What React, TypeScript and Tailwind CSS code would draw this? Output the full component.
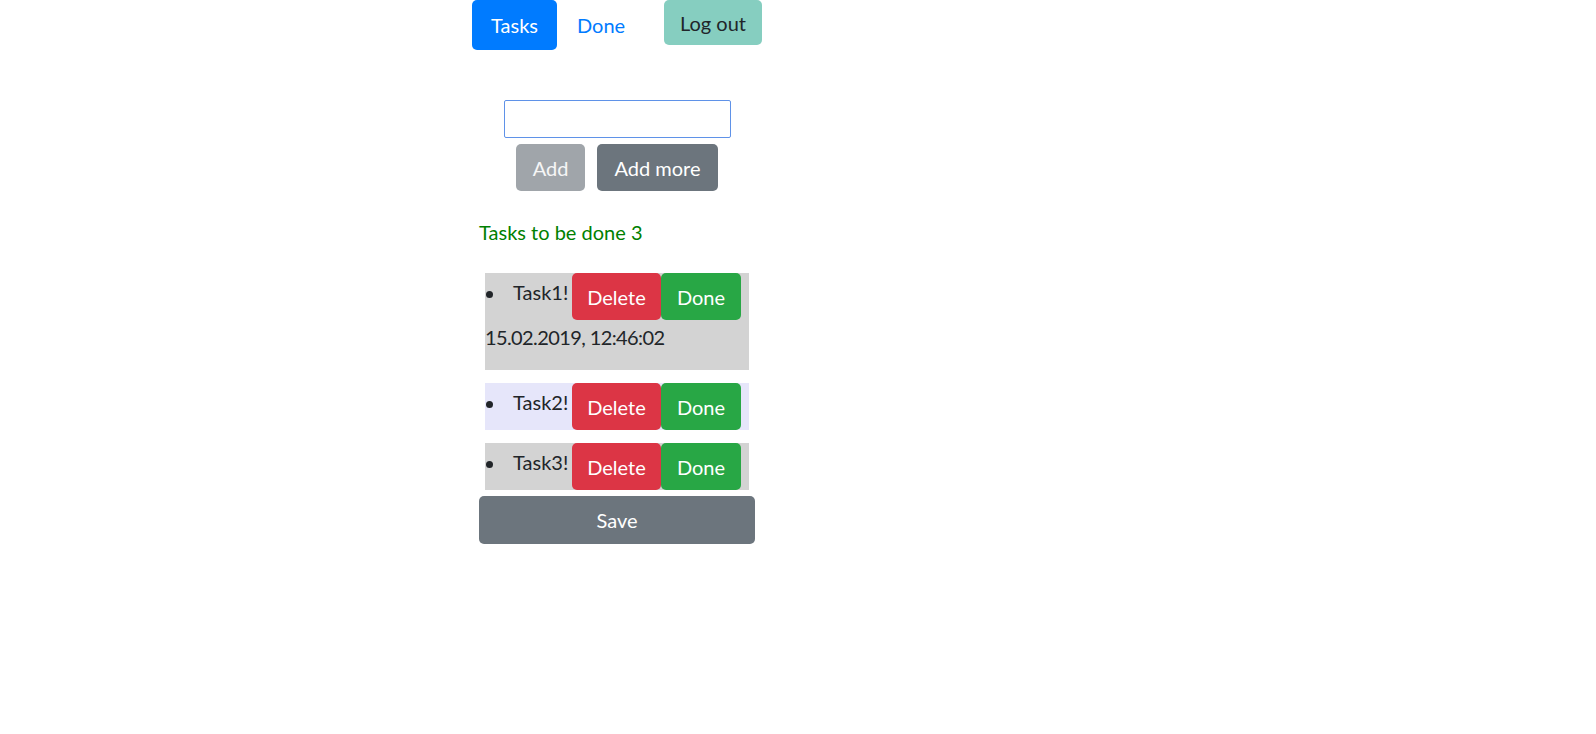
const tasks = [
  { name: "Task1!", date: "15.02.2019, 12:46:02", bg: "bg-[#d3d3d3]" },
  { name: "Task2!", date: null, bg: "bg-[#e6e6fa]" },
  { name: "Task3!", date: null, bg: "bg-[#d3d3d3]" },
];

export default function App() {
  return (
    <div className="min-h-screen bg-white text-[20px] leading-[30px] text-[#212529] font-['Lato',sans-serif]">
      <div className="ml-[472px] w-[290px] flex flex-col">
        {/* nav */}
        <div className="flex items-start h-[50px]">
          <button className="w-[85px] h-[50px] rounded-[5px] bg-[#007bff] text-white">
            Tasks
          </button>
          <a href="#" className="w-[107px] h-[50px] pl-5 py-[10px] text-[#007bff]">
            Done
          </a>
          <button className="w-[98px] h-[45px] rounded-[5px] bg-[#86cec0] text-[#212529]">
            Log out
          </button>
        </div>

        {/* add form */}
        <div className="flex flex-col items-center mt-[50px]">
          <input
            type="text"
            className="w-[227px] h-[38px] border border-[#5f92e8] rounded-[2px] outline-none px-2"
          />
          <div className="flex gap-3 mt-[6px]">
            <button className="w-[69px] h-[47px] rounded-[5px] bg-[#a0a5aa] text-white/90">
              Add
            </button>
            <button className="w-[121px] h-[47px] rounded-[5px] bg-[#6c757d] text-white">
              Add more
            </button>
          </div>
        </div>

        <p className="mt-[26px] ml-[7px] text-[#008000]">Tasks to be done 3</p>

        <ul className="mt-[26px] mx-[13px] flex flex-col gap-[13px]">
          {tasks.map((t) => (
            <li key={t.name} className={t.bg}>
              <div className="flex items-start">
                <span className="w-[28px] h-[47px] flex items-start pt-[18px] pl-[1px]">
                  <span className="w-[7px] h-[7px] rounded-full bg-[#212529]" />
                </span>
                <span className="w-[59px] pt-[4px]">{t.name}</span>
                <button className="w-[89px] h-[47px] rounded-[5px] bg-[#dc3545] text-white">
                  Delete
                </button>
                <button className="w-[80px] h-[47px] rounded-[5px] bg-[#28a745] text-white">
                  Done
                </button>
              </div>
              {t.date && (
                <div className="pt-[2px] pb-[18px] tracking-[-0.6px]">{t.date}</div>
              )}
            </li>
          ))}
        </ul>

        <button className="mt-[6px] mx-[7px] h-[48px] rounded-[5px] bg-[#6c757d] text-white">
          Save
        </button>
      </div>
    </div>
  );
}
